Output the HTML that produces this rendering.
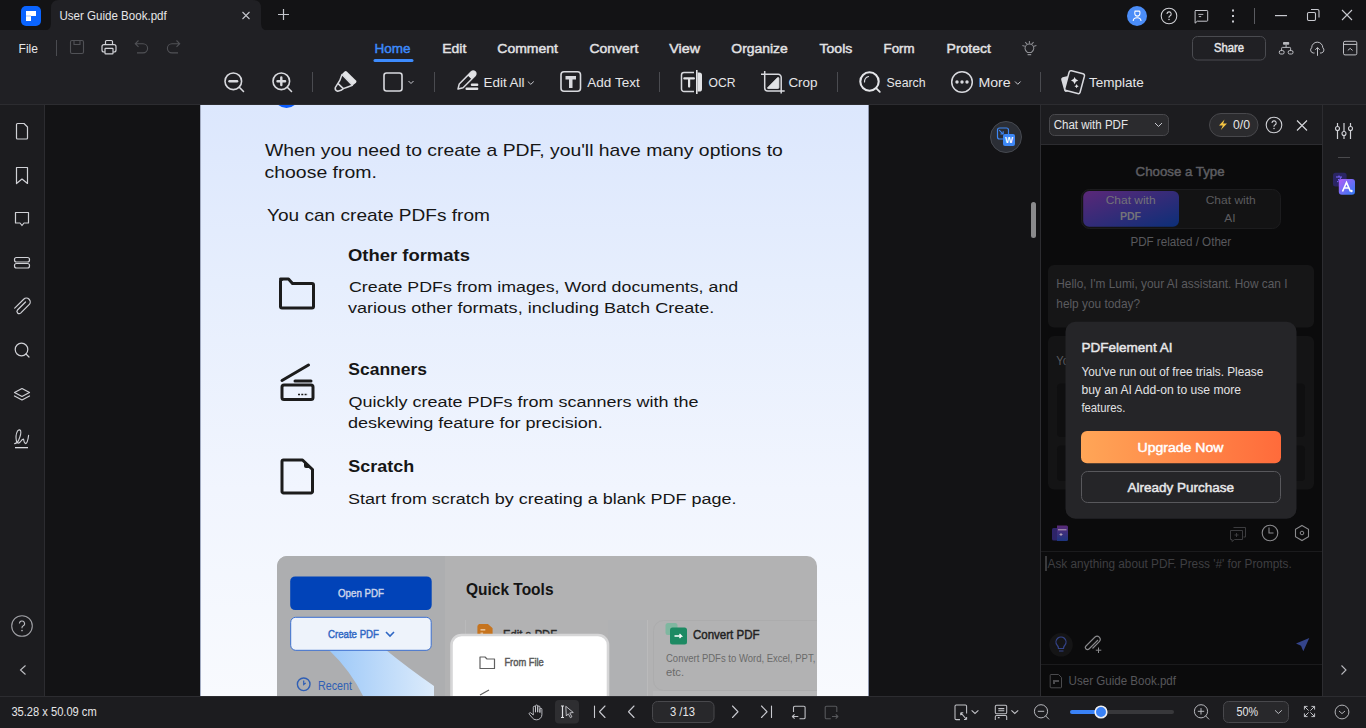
<!DOCTYPE html>
<html><head><meta charset="utf-8">
<style>
*{margin:0;padding:0}
html,body{width:1366px;height:728px;overflow:hidden;background:#131315}
svg{position:absolute;left:0;top:0;display:block}
text{font-family:"Liberation Sans",sans-serif;white-space:pre}
</style></head><body>
<svg width="1366" height="728" viewBox="0 0 1366 728">
<defs><linearGradient id="pageg" x1="0" y1="0" x2="0" y2="1"><stop offset="0" stop-color="#dce7fd"/><stop offset="0.3" stop-color="#e6eefd"/><stop offset="0.65" stop-color="#f1f5fe"/><stop offset="1" stop-color="#f8fafe"/></linearGradient><linearGradient id="purp" x1="0" y1="0" x2="1" y2="1"><stop offset="0" stop-color="#5b2878"/><stop offset="1" stop-color="#0c2f78"/></linearGradient><linearGradient id="orng" x1="0" y1="0" x2="1" y2="0"><stop offset="0" stop-color="#ffa657"/><stop offset="1" stop-color="#ff6b3b"/></linearGradient><linearGradient id="book" x1="0" y1="0" x2="0" y2="1"><stop offset="0" stop-color="#5a2a78"/><stop offset="1" stop-color="#1d3580"/></linearGradient><linearGradient id="swoosh" x1="0" y1="0" x2="1" y2="0"><stop offset="0" stop-color="#9cc8f8"/><stop offset="1" stop-color="#dcebfb"/></linearGradient><linearGradient id="trans" x1="0" y1="0" x2="1" y2="1"><stop offset="0" stop-color="#b25cf6"/><stop offset="1" stop-color="#2f7cf6"/></linearGradient><clipPath id="pageclip"><rect x="200" y="105" width="669" height="591"/></clipPath></defs>
<rect x="0" y="0" width="1366" height="31" fill="#131315" />
<rect x="0" y="30" width="1366" height="74" fill="#202024" />
<path d="M43,31 Q51,31 51,23 L51,8 Q51,0 59,0 L253,0 Q261,0 261,8 L261,23 Q261,31 269,31 Z" fill="#202024"/>
<rect x="0" y="104" width="1366" height="1" fill="#2c2c30" />
<rect x="0" y="105" width="44" height="591" fill="#1c1c1f" />
<rect x="44" y="105" width="1" height="591" fill="#2c2c30" />
<rect x="45" y="105" width="995" height="591" fill="#131315" />
<rect x="200" y="105" width="669" height="591" fill="url(#pageg)" />
<rect x="868" y="105" width="1" height="591" fill="#8e96ad" />
<rect x="200" y="105" width="1" height="591" fill="#a3acc2" />
<rect x="1040" y="105" width="1" height="591" fill="#2c2c30" />
<rect x="1041" y="105" width="281" height="40" fill="#1c1c1f" />
<rect x="1041" y="144" width="281" height="1" fill="#2c2c30" />
<rect x="1041" y="145" width="281" height="551" fill="#0b0b0c" />
<rect x="1322" y="105" width="1" height="591" fill="#2c2c30" />
<rect x="1323" y="105" width="43" height="591" fill="#1c1c1f" />
<rect x="0" y="696" width="1366" height="1" fill="#2c2c30" />
<rect x="0" y="697" width="1366" height="31" fill="#1c1c1f" />
<rect x="21" y="6" width="20" height="20" fill="#0a64ff" rx="5" />
<path d="M26,11 H36 V16 H31 V21 H26 Z" fill="#ffffff"/>
<rect x="26" y="15.5" width="5" height="1" fill="#9fc3ff" />
<text x="59.50" y="20.00" font-size="12.5" font-weight="400" fill="#e6e6e8" textLength="107.20" lengthAdjust="spacingAndGlyphs" >User Guide Book.pdf</text>
<path d="M242.5,12 L249.5,19 M249.5,12 L242.5,19" stroke="#c4c6cd" stroke-width="1.1" fill="none"/>
<path d="M283.5,9 V20 M278,14.5 H289" stroke="#c4c6cd" stroke-width="1.2" fill="none"/>
<circle cx="1137" cy="16" r="10" fill="#4b8df8"/>
<path d="M1134.6,11.1 h4.4 a0.9,0.9 0 0 1 0.9,0.9 v1.6 a2.5,2.5 0 0 1 -5.1,0 v-1.6 a0.9,0.9 0 0 1 0.9,-0.9 z M1133.2,21 q0,-3.3 3.9,-3.3 q3.9,0 3.9,3.3" stroke="#ffffff" stroke-width="1.05" fill="none"/>
<circle cx="1169" cy="16" r="7.8" stroke="#d0d1d6" stroke-width="1.05" fill="none"/>
<path d="M1167,14 a2.1,2.1 0 1 1 2.9,1.9 q-0.9,0.4 -0.9,1.4 v0.4" stroke="#d0d1d6" stroke-width="1.1" fill="none"/><circle cx="1169" cy="19.6" r="0.75" fill="#d0d1d6"/>
<path d="M1195.3,10.5 h11.6 a0.8,0.8 0 0 1 0.8,0.8 v9.1 a0.8,0.8 0 0 1 -0.8,0.8 h-9.6 l-2.2,2 v-11.9 a0.8,0.8 0 0 1 0.8,-0.8 z" stroke="#c8c9cf" stroke-width="1" fill="none" stroke-linejoin="round"/>
<path d="M1198.3,14.4 h5 M1198.8,16.6 h2.4" stroke="#c8c9cf" stroke-width="0.9"/>
<g fill="#c8c9cf"><rect x="1232" y="9.5" width="2" height="2"/><rect x="1232" y="15" width="2" height="2"/><rect x="1232" y="20.5" width="2" height="2"/></g>
<rect x="1254" y="8" width="1" height="16" fill="#5a5b60" />
<rect x="1275" y="15" width="12" height="1.2" fill="#c8c9cf" />
<rect x="1307.5" y="12.5" width="8" height="8" rx="1.2" stroke="#c8c9cf" stroke-width="1.1" fill="none"/>
<path d="M1311,9.5 h6.5 a1.5,1.5 0 0 1 1.5,1.5 v6.5" stroke="#c8c9cf" stroke-width="1.1" fill="none"/>
<path d="M1342,10 L1352,20 M1352,10 L1342,20" stroke="#c8c9cf" stroke-width="1.1" fill="none"/>
<text x="18.60" y="53.00" font-size="13" font-weight="400" fill="#e6e6e8" textLength="19.40" lengthAdjust="spacingAndGlyphs" >File</text>
<rect x="56" y="40" width="1" height="16" fill="#4a4b50" />
<path d="M70.5,42 a1.5,1.5 0 0 1 1.5,-1.5 h10 a1.5,1.5 0 0 1 1.5,1.5 v10 a1.5,1.5 0 0 1 -1.5,1.5 h-10 a1.5,1.5 0 0 1 -1.5,-1.5 z M74,40.5 v4 h6 v-4" stroke="#505156" stroke-width="1.1" fill="none"/>
<path d="M105.5,44.5 v-3 a1,1 0 0 1 1,-1 h5 a1,1 0 0 1 1,1 v3" stroke="#d0d1d6" stroke-width="1.2" fill="none"/>
<rect x="102" y="44.6" width="14" height="7.4" rx="2" stroke="#d0d1d6" stroke-width="1.2" fill="none"/>
<rect x="105" y="48.3" width="8" height="5.6" rx="0.6" stroke="#d0d1d6" stroke-width="1.2" fill="#202024"/>
<path d="M138.5,40.5 l-3.2,3.2 l3.2,3.2 M135.5,43.7 h7.5 a4.6,4.6 0 0 1 0,9.2 h-6" stroke="#505156" stroke-width="1.1" fill="none"/>
<path d="M176.5,40.5 l3.2,3.2 l-3.2,3.2 M179.5,43.7 h-7.5 a4.6,4.6 0 0 0 0,9.2 h6" stroke="#505156" stroke-width="1.1" fill="none"/>
<text x="374.50" y="53.00" font-size="13.5" font-weight="400" fill="#3d8bfd" textLength="36.00" lengthAdjust="spacingAndGlyphs"  stroke="#3d8bfd" stroke-width="0.45">Home</text>
<rect x="373.5" y="59" width="40" height="3" rx="1.5" fill="#3d8bfd"/>
<text x="442.20" y="53.00" font-size="13.5" font-weight="400" fill="#e2e2e4" textLength="24.10" lengthAdjust="spacingAndGlyphs"  stroke="#e2e2e4" stroke-width="0.45">Edit</text>
<text x="497.30" y="53.00" font-size="13.5" font-weight="400" fill="#e2e2e4" textLength="60.60" lengthAdjust="spacingAndGlyphs"  stroke="#e2e2e4" stroke-width="0.45">Comment</text>
<text x="589.50" y="53.00" font-size="13.5" font-weight="400" fill="#e2e2e4" textLength="48.90" lengthAdjust="spacingAndGlyphs"  stroke="#e2e2e4" stroke-width="0.45">Convert</text>
<text x="669.20" y="53.00" font-size="13.5" font-weight="400" fill="#e2e2e4" textLength="30.80" lengthAdjust="spacingAndGlyphs"  stroke="#e2e2e4" stroke-width="0.45">View</text>
<text x="731.30" y="53.00" font-size="13.5" font-weight="400" fill="#e2e2e4" textLength="56.50" lengthAdjust="spacingAndGlyphs"  stroke="#e2e2e4" stroke-width="0.45">Organize</text>
<text x="819.50" y="53.00" font-size="13.5" font-weight="400" fill="#e2e2e4" textLength="32.80" lengthAdjust="spacingAndGlyphs"  stroke="#e2e2e4" stroke-width="0.45">Tools</text>
<text x="883.60" y="53.00" font-size="13.5" font-weight="400" fill="#e2e2e4" textLength="31.00" lengthAdjust="spacingAndGlyphs"  stroke="#e2e2e4" stroke-width="0.45">Form</text>
<text x="946.60" y="53.00" font-size="13.5" font-weight="400" fill="#e2e2e4" textLength="44.20" lengthAdjust="spacingAndGlyphs"  stroke="#e2e2e4" stroke-width="0.45">Protect</text>
<path d="M1027.4,52.4 q-2.4,-2.2 -2.4,-3.9 a4.4,4.4 0 0 1 8.8,0 q0,1.7 -2.4,3.9 z M1027.6,54.6 h3.6" stroke="#8e8f94" stroke-width="1.05" fill="none"/>
<path d="M1029.4,41 v2.8 M1025.2,42.2 l1.9,1.9 M1033.6,42.2 l-1.9,1.9 M1022.4,45.6 l2.4,0.7 M1036.4,45.6 l-2.4,0.7" stroke="#8e8f94" stroke-width="1.05"/>
<rect x="1192.5" y="36.5" width="73" height="23.5" rx="5" fill="none" stroke="#4a4b50" stroke-width="1"/>
<text x="1214.00" y="52.00" font-size="12.5" font-weight="400" fill="#e6e6e8" textLength="30.00" lengthAdjust="spacingAndGlyphs"  stroke="#e6e6e8" stroke-width="0.45">Share</text>
<rect x="1283" y="42" width="6.2" height="2.8" fill="#b8b9be" rx="0.8" />
<path d="M1286.1,44.8 v2.6 M1281.6,50.4 v-2.2 a0.8,0.8 0 0 1 0.8,-0.8 h7.4 a0.8,0.8 0 0 1 0.8,0.8 v2.2" stroke="#c0c1c6" stroke-width="0.95" fill="none"/>
<rect x="1279.3" y="50.6" width="4.8" height="3.4" rx="1.4" stroke="#c8c9cf" stroke-width="0.95" fill="none"/><rect x="1288.2" y="50.6" width="4.8" height="3.4" rx="1.4" stroke="#c8c9cf" stroke-width="0.95" fill="none"/>
<path d="M1314.5,53 h-1.2 a3,3 0 0 1 -1.6,-5.3 a5.5,5.5 0 0 1 11.1,0 a3,3 0 0 1 -1.6,5.3 h-1.2 M1317.5,55.8 v-8.2 M1315.3,49.8 l2.2,-2.2 l2.2,2.2" stroke="#c8c9cf" stroke-width="0.95" fill="none" stroke-linejoin="round"/>
<rect x="1343.5" y="41.3" width="13.3" height="13.6" rx="1.5" stroke="#c8c9cf" stroke-width="0.95" fill="none"/>
<path d="M1343.5,44.4 h13.3 M1347.8,50.4 l2.4,-2 l2.4,2" stroke="#c8c9cf" stroke-width="0.95" fill="none"/>
<circle cx="233.3" cy="81.3" r="8.3" stroke="#d8d9de" stroke-width="1.6" fill="none" stroke-linecap="round" stroke-linejoin="round"/><path d="M239.3,87.3 L243.5,91.5 M229.5,81.3 h7.6" stroke="#d8d9de" stroke-width="1.6" fill="none" stroke-linecap="round" stroke-linejoin="round"/>
<path d="M229.5,81.3 h7.6" stroke="#d8d9de" stroke-width="2.4" stroke-linecap="round"/>
<circle cx="281.3" cy="81.3" r="8.3" stroke="#d8d9de" stroke-width="1.6" fill="none" stroke-linecap="round" stroke-linejoin="round"/><path d="M287.3,87.3 L291.5,91.5" stroke="#d8d9de" stroke-width="1.6" fill="none" stroke-linecap="round" stroke-linejoin="round"/>
<path d="M277.5,81.3 h7.6 M281.3,77.5 v7.6" stroke="#d8d9de" stroke-width="2.4" stroke-linecap="round"/>
<rect x="312" y="72" width="1" height="20" fill="#4a4b50" />
<path d="M341.8,74.2 L344.6,71.4 a1.6,1.6 0 0 1 2.2,0 L356,80.6 a1.6,1.6 0 0 1 0,2.2 L352.6,85.4 Z" fill="#e2e3e6"/>
<path d="M342,74.5 L339.8,80.5 L337.9,83.4 L343.3,88.6 L347.2,87.2 L352.4,85.3 Z" stroke="#d8d9de" stroke-width="1.5" fill="none" stroke-linejoin="round"/>
<path d="M337.9,83.4 L335.3,87.6 Q334.6,90.3 337.6,91.2 L341,90.3 L343.3,88.6" stroke="#d8d9de" stroke-width="1.5" fill="none" stroke-linejoin="round"/>
<rect x="384" y="73" width="18" height="18" rx="2.5" stroke="#d8d9de" stroke-width="1.6" fill="none"/>
<path d="M408.5,81 l2.5,2.5 l2.5,-2.5" stroke="#c8c9cf" stroke-width="1" fill="none"/>
<rect x="434" y="72" width="1" height="20" fill="#4a4b50" />
<g transform="translate(458,89) rotate(-45)"><path d="M0,0 L4.5,-2.7 H21.5 A2.7,2.7 0 0 1 21.5,2.7 H4.5 Z" stroke="#d8d9de" stroke-width="1.5" fill="none" stroke-linejoin="round"/><path d="M16.5,-2.7 H21.5 A2.7,2.7 0 0 1 21.5,2.7 H16.5 Z" fill="#e2e3e6"/></g>
<rect x="470.8" y="83.6" width="7.5" height="2.3" rx="1" fill="#e2e3e6"/><rect x="465.5" y="87.6" width="12.8" height="2.3" rx="1" fill="#e2e3e6"/>
<text x="483.50" y="87.00" font-size="13.5" font-weight="400" fill="#e6e6e8" textLength="41.00" lengthAdjust="spacingAndGlyphs" >Edit All</text>
<path d="M527.8,81.5 l3,2.8 l3,-2.8" stroke="#c8c9cf" stroke-width="1" fill="none"/>
<rect x="561" y="71.8" width="19.5" height="19.5" rx="3" stroke="#d8d9de" stroke-width="1.6" fill="none"/>
<path d="M565.5,76 h10.5 v3.5 h-3.5 v8.5 h-3.5 v-8.5 h-3.5 z" fill="#d8d9de"/>
<text x="587.30" y="87.00" font-size="13.5" font-weight="400" fill="#e6e6e8" textLength="52.40" lengthAdjust="spacingAndGlyphs" >Add Text</text>
<rect x="659" y="72" width="1" height="20" fill="#4a4b50" />
<path d="M694,72.5 h-10 a2.5,2.5 0 0 0 -2.5,2.5 v14 a2.5,2.5 0 0 0 2.5,2.5 h10" stroke="#d8d9de" stroke-width="1.5" fill="none"/>
<path d="M696.8,70 v24" stroke="#e2e3e6" stroke-width="1.6"/>
<path d="M697.6,72.5 h1.8 a2.6,2.6 0 0 1 2.6,2.6 v13.8 a2.6,2.6 0 0 1 -2.6,2.6 h-1.8 z" fill="#e2e3e6"/>
<path d="M684.3,78.4 h9.6 M689.1,78.6 v8" stroke="#e2e3e6" stroke-width="2.2" stroke-linecap="round"/>
<text x="708.60" y="87.00" font-size="13.5" font-weight="400" fill="#e6e6e8" textLength="27.00" lengthAdjust="spacingAndGlyphs" >OCR</text>
<path d="M761,74.3 h17.2 a3,3 0 0 1 3,3 v16.2 M764.7,71 v17 a3,3 0 0 0 3,3 h17" stroke="#d8d9de" stroke-width="1.5" fill="none"/>
<path d="M767.3,88 L777.6,77.6 a0.8,0.8 0 0 1 1.3,0.6 V87.5 a1,1 0 0 1 -1,1 H767.8 z" fill="#e2e3e6" stroke="#e2e3e6" stroke-width="0.8" stroke-linejoin="round"/>
<text x="788.40" y="87.00" font-size="13.5" font-weight="400" fill="#e6e6e8" textLength="29.20" lengthAdjust="spacingAndGlyphs" >Crop</text>
<rect x="837" y="72" width="1" height="20" fill="#4a4b50" />
<circle cx="869.5" cy="81.5" r="9.2" stroke="#e4e5e8" stroke-width="2.1" fill="none"/>
<path d="M876.6,88.6 l3.2,3.2" stroke="#e4e5e8" stroke-width="1.8" stroke-linecap="round"/>
<path d="M864.5,82 a5.5,5.5 0 0 1 4,-5.5" stroke="#d8d9de" stroke-width="1.2" fill="none" stroke-linecap="round"/>
<text x="886.60" y="87.00" font-size="13.5" font-weight="400" fill="#e6e6e8" textLength="39.00" lengthAdjust="spacingAndGlyphs" >Search</text>
<circle cx="962" cy="82" r="10.3" stroke="#d8d9de" stroke-width="1.5" fill="none"/>
<g fill="#d8d9de"><circle cx="957" cy="82" r="1.7"/><circle cx="962" cy="82" r="1.7"/><circle cx="967" cy="82" r="1.7"/></g>
<text x="978.40" y="87.00" font-size="13.5" font-weight="400" fill="#e6e6e8" textLength="32.20" lengthAdjust="spacingAndGlyphs" >More</text>
<path d="M1015,81.5 l2.8,2.8 l2.8,-2.8" stroke="#c8c9cf" stroke-width="1" fill="none"/>
<rect x="1040" y="72" width="1" height="20" fill="#4a4b50" />
<path d="M1068,76 L1062.6,77.3 Q1060.8,77.9 1061.2,79.7 L1064.2,90.6 Q1064.8,92.3 1066.6,91.8 L1071,90.6 Z" fill="#d8d9de"/>
<path d="M1071.5,70.8 l11.5,3 a2,2 0 0 1 1.4,2.4 l-4.3,16 a2,2 0 0 1 -2.4,1.4 l-11.5,-3 a2,2 0 0 1 -1.4,-2.4 l4.3,-16 a2,2 0 0 1 2.4,-1.4 z" stroke="#d8d9de" stroke-width="1.5" fill="#202024"/>
<path d="M1074.6,77.0 Q1075.2479999999998,79.952 1078.1999999999998,80.6 Q1075.2479999999998,81.24799999999999 1074.6,84.19999999999999 Q1073.952,81.24799999999999 1071.0,80.6 Q1073.952,79.952 1074.6,77.0 Z M1076.6,84.10000000000001 Q1076.9779999999998,85.822 1078.6999999999998,86.2 Q1076.9779999999998,86.578 1076.6,88.3 Q1076.222,86.578 1074.5,86.2 Q1076.222,85.822 1076.6,84.10000000000001 Z" fill="#e2e3e6"/>
<text x="1089.00" y="86.80" font-size="13.5" font-weight="400" fill="#e6e6e8" textLength="54.80" lengthAdjust="spacingAndGlyphs" >Template</text>
<path d="M16.5,124.5 a1,1 0 0 1 1,-1 h6.5 l3.5,3.5 v11 a1,1 0 0 1 -1,1 h-9 a1,1 0 0 1 -1,-1 z" stroke="#d0d1d6" stroke-width="1.2" fill="none" stroke-linejoin="round" stroke-linecap="round"/>
<path d="M16.5,167.5 h11 v16 l-5.5,-4.5 l-5.5,4.5 z" stroke="#d0d1d6" stroke-width="1.2" fill="none" stroke-linejoin="round" stroke-linecap="round"/>
<path d="M15.5,212.5 h13 v10.5 h-4.5 l-2,2.5 l-2,-2.5 h-4.5 z" stroke="#d0d1d6" stroke-width="1.2" fill="none" stroke-linejoin="round" stroke-linecap="round"/>
<rect x="14.5" y="257.5" width="15" height="4.5" rx="2" stroke="#d0d1d6" stroke-width="1.2" fill="none" stroke-linejoin="round" stroke-linecap="round"/><rect x="14.5" y="263.5" width="15" height="4.5" rx="2" stroke="#d0d1d6" stroke-width="1.2" fill="none" stroke-linejoin="round" stroke-linecap="round"/>
<path d="M25.5,302 l-8,8 a2.2,2.2 0 0 0 3.1,3.1 l8.5,-8.5 a3.8,3.8 0 0 0 -5.4,-5.4 l-9,9" stroke="#d0d1d6" stroke-width="1.2" fill="none" stroke-linejoin="round" stroke-linecap="round"/>
<circle cx="21.5" cy="349.5" r="6.3" stroke="#d0d1d6" stroke-width="1.2" fill="none" stroke-linejoin="round" stroke-linecap="round"/><path d="M26,354 l3,3" stroke="#d0d1d6" stroke-width="1.2" fill="none" stroke-linejoin="round" stroke-linecap="round"/>
<path d="M22,388.5 l7.5,4 l-7.5,4 l-7.5,-4 z M14.5,396 l7.5,4 l7.5,-4" stroke="#d0d1d6" stroke-width="1.2" fill="none" stroke-linejoin="round" stroke-linecap="round"/>
<path d="M14.6,443.6 Q17,443.6 18.6,440.2 Q21.6,433.5 20.6,430.6 Q19.4,428.8 17.4,431.2 Q15.3,435.2 16.4,441 Q17.4,444.6 20.2,442 Q22.6,438.6 23.6,439.2 Q24,443 25.6,443.6 Q27.6,443.2 28.6,435.4" stroke="#d0d1d6" stroke-width="1.1" fill="none" stroke-linecap="round" stroke-linejoin="round"/>
<rect x="15" y="447" width="13" height="1.3" fill="#d8d9de" />
<circle cx="22" cy="626" r="10.3" stroke="#a0a1a6" stroke-width="1.1" fill="none"/>
<path d="M19.4,623.6 a2.6,2.6 0 1 1 3.6,2.4 q-1,0.5 -1,1.7 v0.6" stroke="#b8b9be" stroke-width="1.1" fill="none"/><circle cx="22" cy="630.6" r="0.8" fill="#b8b9be"/>
<path d="M25.5,665.5 l-5,4.5 l5,4.5" stroke="#c0c1c6" stroke-width="1.1" fill="none"/>
<g clip-path="url(#pageclip)">
<circle cx="286.5" cy="95.5" r="12.5" fill="#0a5cff"/>
<text x="264.90" y="155.80" font-size="17" font-weight="400" fill="#161616" textLength="517.90" lengthAdjust="spacingAndGlyphs" >When you need to create a PDF, you&#x27;ll have many options to</text>
<text x="264.50" y="177.80" font-size="17" font-weight="400" fill="#161616" textLength="112.40" lengthAdjust="spacingAndGlyphs" >choose from.</text>
<text x="267.00" y="220.90" font-size="17" font-weight="400" fill="#161616" textLength="222.90" lengthAdjust="spacingAndGlyphs" >You can create PDFs from</text>
<text x="348.00" y="260.50" font-size="17" font-weight="700" fill="#161616" textLength="121.90" lengthAdjust="spacingAndGlyphs" >Other formats</text>
<text x="349.00" y="292.20" font-size="15.2" font-weight="400" fill="#161616" textLength="389.20" lengthAdjust="spacingAndGlyphs" >Create PDFs from images, Word documents, and</text>
<text x="348.00" y="313.30" font-size="15.2" font-weight="400" fill="#161616" textLength="366.40" lengthAdjust="spacingAndGlyphs" >various other formats, including Batch Create.</text>
<text x="348.30" y="374.90" font-size="17" font-weight="700" fill="#161616" textLength="78.70" lengthAdjust="spacingAndGlyphs" >Scanners</text>
<text x="348.50" y="407.00" font-size="15.2" font-weight="400" fill="#161616" textLength="350.10" lengthAdjust="spacingAndGlyphs" >Quickly create PDFs from scanners with the</text>
<text x="348.00" y="428.30" font-size="15.2" font-weight="400" fill="#161616" textLength="254.80" lengthAdjust="spacingAndGlyphs" >deskewing feature for precision.</text>
<text x="348.30" y="472.00" font-size="17" font-weight="700" fill="#161616" textLength="65.90" lengthAdjust="spacingAndGlyphs" >Scratch</text>
<text x="348.00" y="504.30" font-size="15.2" font-weight="400" fill="#161616" textLength="388.50" lengthAdjust="spacingAndGlyphs" >Start from scratch by creating a blank PDF page.</text>
<path d="M280.5,279 h8 l4,4.5 h19.5 a1.5,1.5 0 0 1 1.5,1.5 v21.5 a1.5,1.5 0 0 1 -1.5,1.5 h-30 a1.5,1.5 0 0 1 -1.5,-1.5 v-25.5 a1.5,1.5 0 0 1 1.5,-1.5 z" stroke="#1c1c1c" stroke-width="3" fill="none" stroke-linejoin="round" stroke-linecap="round"/>
<path d="M282,380.5 L308.5,365" stroke="#1c1c1c" stroke-width="3" fill="none" stroke-linejoin="round" stroke-linecap="round"/><path d="M295,381 h16" stroke="#1c1c1c" stroke-width="3" stroke-linecap="round"/>
<rect x="282" y="385" width="31" height="14.5" rx="2" stroke="#1c1c1c" stroke-width="3" fill="none" stroke-linejoin="round" stroke-linecap="round"/>
<path d="M298,394.5 h10" stroke="#1c1c1c" stroke-width="1.3" stroke-dasharray="2,1.3"/>
<path d="M283.5,460 h19 l10,9.5 v22 a1.5,1.5 0 0 1 -1.5,1.5 h-27.5 a1.5,1.5 0 0 1 -1.5,-1.5 v-30 a1.5,1.5 0 0 1 1.5,-1.5 z" stroke="#1c1c1c" stroke-width="3" fill="none" stroke-linejoin="round" stroke-linecap="round"/>
<path d="M304,461 l7,7 h-5 a2,2 0 0 1 -2,-2 z" fill="#1c1c1c"/>
<path d="M277,696 V566 a10,10 0 0 1 10,-10 H807 a10,10 0 0 1 10,10 V696 Z" fill="#b2b2b3"/>
<path d="M277,696 V566 a10,10 0 0 1 10,-10 H445 V696 Z" fill="#adaeb0"/>
<rect x="465" y="620" width="1" height="76" fill="#b9b9ba" />
<rect x="608" y="620" width="39" height="76" fill="#b0b1b3" />
<rect x="647" y="620" width="1" height="76" fill="#bababb" />
<path d="M817,620.5 H663.5 a10,10 0 0 0 -10,10 V680.5 a10,10 0 0 0 10,10 H817" fill="none" stroke="#acacad" stroke-width="1"/>
<rect x="653" y="691" width="164" height="5" fill="#b7b7b8" />
<path d="M329,650 L386,650 Q408,668 434,686 L434,700 L365,700 Q352,672 329,650 Z" fill="url(#swoosh)"/>
<rect x="290.2" y="576.4" width="141.5" height="33.7" rx="5" fill="#0143b8"/>
<text x="338.00" y="597.00" font-size="11" font-weight="400" fill="#c9d3ea" textLength="46.00" lengthAdjust="spacingAndGlyphs"  stroke="#c9d3ea" stroke-width="0.45">Open PDF</text>
<rect x="290.7" y="617.3" width="140.5" height="33" rx="5" fill="#eef3fb" stroke="#3a6fd0" stroke-width="1"/>
<text x="328.00" y="638.00" font-size="11" font-weight="400" fill="#2f67c4" textLength="51.00" lengthAdjust="spacingAndGlyphs"  stroke="#2f67c4" stroke-width="0.45">Create PDF</text>
<path d="M386,632 l4,4 l4,-4" stroke="#2f67c4" stroke-width="1.6" fill="none"/>
<circle cx="303.7" cy="684.3" r="6.3" stroke="#2f5fb5" stroke-width="1.4" fill="none"/><path d="M303.7,680.5 v4 l2,-1.5" stroke="#2f5fb5" stroke-width="1.2" fill="none"/>
<text x="318.00" y="689.50" font-size="12" font-weight="400" fill="#2f5fb5" textLength="34.00" lengthAdjust="spacingAndGlyphs" >Recent</text>
<text x="466.00" y="594.60" font-size="16.5" font-weight="700" fill="#141414" textLength="87.50" lengthAdjust="spacingAndGlyphs" >Quick Tools</text>
<path d="M479.5,624.5 h8 l4.5,4 v6.5 h-14 v-8.5 a2,2 0 0 1 1.5,-2 z" fill="#c6741f" stroke="#c6741f" stroke-width="1.2" stroke-linejoin="round"/>
<rect x="480.5" y="629.2" width="4.8" height="1.3" fill="#f0d2b0" />
<rect x="480.5" y="632.6" width="2.6" height="1.1" fill="#f0d2b0" />
<text x="503.00" y="638.50" font-size="12" font-weight="400" fill="#2a2a2a" textLength="54.00" lengthAdjust="spacingAndGlyphs"  stroke="#2a2a2a" stroke-width="0.45">Edit a PDF</text>
<rect x="451.5" y="635" width="156.5" height="80" rx="10" fill="#ffffff" stroke="#d6d6d7" stroke-width="2.6"/>
<path d="M480,657 h5 l2,2 h7.5 v9.5 h-14.5 z" stroke="#606060" stroke-width="1.2" fill="none" stroke-linejoin="round"/>
<text x="504.40" y="666.00" font-size="10.5" font-weight="400" fill="#5a5a5a" textLength="39.40" lengthAdjust="spacingAndGlyphs"  stroke="#5a5a5a" stroke-width="0.45">From File</text>
<path d="M480,695 l9,-5" stroke="#606060" stroke-width="1.2"/>
<rect x="665.5" y="623" width="12" height="12" fill="#7fb7a0" rx="2.5" />
<rect x="670" y="627.5" width="17" height="17" fill="#1d8a63" rx="2.5" />
<path d="M674.5,636 h7 l-2,-2 M681.5,636 l-2,2" stroke="#ffffff" stroke-width="1.3" fill="none"/>
<text x="693.00" y="639.00" font-size="12.5" font-weight="400" fill="#222222" textLength="66.50" lengthAdjust="spacingAndGlyphs"  stroke="#222222" stroke-width="0.45">Convert PDF</text>
<text x="666.00" y="661.80" font-size="10" font-weight="400" fill="#6a6a6a" textLength="149.30" lengthAdjust="spacingAndGlyphs" >Convert PDFs to Word, Excel, PPT,</text>
<text x="666.00" y="675.80" font-size="10" font-weight="400" fill="#6a6a6a" textLength="18.00" lengthAdjust="spacingAndGlyphs" >etc.</text>
</g>
<circle cx="1006" cy="137" r="15.5" fill="#2b2e35" stroke="#464950" stroke-width="1"/>
<rect x="997.5" y="128" width="11" height="11" rx="2" stroke="#3d87f5" stroke-width="1.2" fill="none"/>
<path d="M999.2,130.2 l3.6,3.6 M1003.2,131.2 v2.8 h-2.8" stroke="#3d87f5" stroke-width="1.1" fill="none"/>
<rect x="1003" y="134" width="12" height="12" fill="#3d87f5" rx="2" />
<text x="1009" y="142.6" font-size="8.5" font-weight="700" fill="#ffffff" text-anchor="middle">W</text>
<rect x="1031" y="202" width="5" height="36" fill="#8a8a8c" rx="2.5" />
<rect x="1049.5" y="114.5" width="119" height="21" rx="5" fill="#2b2b2e" stroke="#48484c" stroke-width="1"/>
<text x="1053.70" y="129.00" font-size="12.5" font-weight="400" fill="#e6e6e8" textLength="74.30" lengthAdjust="spacingAndGlyphs" >Chat with PDF</text>
<path d="M1155,123 l3.5,3.5 l3.5,-3.5" stroke="#c8c9cf" stroke-width="1" fill="none"/>
<rect x="1209.5" y="113.5" width="48.5" height="23" rx="11.5" fill="#2b2b2e" stroke="#48484c" stroke-width="1"/>
<path d="M1224.5,119.5 l-5.5,6 h3.8 l-2,4.5 l6.2,-6.5 h-3.8 z" fill="#f5c443"/>
<text x="1233.00" y="129.00" font-size="12" font-weight="400" fill="#e6e6e8" textLength="17.00" lengthAdjust="spacingAndGlyphs" >0/0</text>
<circle cx="1274" cy="125" r="7.8" stroke="#d0d1d6" stroke-width="1.1" fill="none"/>
<path d="M1272,123 a2.1,2.1 0 1 1 2.9,1.9 q-0.9,0.4 -0.9,1.4 v0.4" stroke="#d0d1d6" stroke-width="1.1" fill="none"/><circle cx="1274" cy="128.6" r="0.75" fill="#d0d1d6"/>
<path d="M1297,120.5 L1307,130.5 M1307,120.5 L1297,130.5" stroke="#d8d9de" stroke-width="1.1" fill="none"/>
<text x="1135.60" y="176.30" font-size="13" font-weight="400" fill="#5e5e62" textLength="89.00" lengthAdjust="spacingAndGlyphs"  stroke="#5e5e62" stroke-width="0.45">Choose a Type</text>
<rect x="1081.5" y="189.5" width="199" height="39" rx="8" fill="#131314" stroke="#1c1c1e" stroke-width="1"/>
<rect x="1083.2" y="190.9" width="95.8" height="35.8" rx="6" fill="url(#purp)"/>
<text x="1105.70" y="203.80" font-size="11.5" font-weight="400" fill="#737378" textLength="49.90" lengthAdjust="spacingAndGlyphs" >Chat with</text>
<text x="1119.90" y="219.60" font-size="11.5" font-weight="700" fill="#737378" textLength="21.20" lengthAdjust="spacingAndGlyphs" >PDF</text>
<text x="1205.70" y="203.80" font-size="11.5" font-weight="400" fill="#5b5b5f" textLength="50.10" lengthAdjust="spacingAndGlyphs" >Chat with</text>
<text x="1224.30" y="222.00" font-size="11.5" font-weight="400" fill="#5b5b5f" textLength="11.30" lengthAdjust="spacingAndGlyphs" >AI</text>
<text x="1130.40" y="245.50" font-size="12" font-weight="400" fill="#59595d" textLength="100.80" lengthAdjust="spacingAndGlyphs" >PDF related / Other</text>
<rect x="1048" y="265" width="266" height="62.5" fill="#161617" rx="6" />
<text x="1056.30" y="288.30" font-size="12.2" font-weight="400" fill="#5b5b5f" textLength="231.20" lengthAdjust="spacingAndGlyphs" >Hello, I&#x27;m Lumi, your AI assistant. How can I</text>
<text x="1056.30" y="307.80" font-size="12.2" font-weight="400" fill="#5b5b5f" textLength="83.70" lengthAdjust="spacingAndGlyphs" >help you today?</text>
<rect x="1048" y="336" width="266" height="153.5" fill="#141415" rx="6" />
<text x="1056.30" y="365.00" font-size="12.2" font-weight="400" fill="#5b5b5f" textLength="18.70" lengthAdjust="spacingAndGlyphs" >You</text>
<rect x="1057" y="383.5" width="248" height="53.5" fill="#0f0f10" rx="4" />
<rect x="1057" y="445.5" width="248" height="35.5" fill="#0f0f10" rx="4" />
<rect x="1065.5" y="321.7" width="231" height="197" fill="#252528" rx="10" />
<text x="1081.40" y="352.00" font-size="13.5" font-weight="400" fill="#e8e8ea" textLength="91.10" lengthAdjust="spacingAndGlyphs"  stroke="#e8e8ea" stroke-width="0.45">PDFelement AI</text>
<text x="1081.40" y="376.00" font-size="12" font-weight="400" fill="#e2e2e4" textLength="181.90" lengthAdjust="spacingAndGlyphs" >You&#x27;ve run out of free trials. Please</text>
<text x="1081.40" y="393.60" font-size="12" font-weight="400" fill="#e2e2e4" textLength="159.60" lengthAdjust="spacingAndGlyphs" >buy an AI Add-on to use more</text>
<text x="1081.40" y="411.70" font-size="12" font-weight="400" fill="#e2e2e4" textLength="44.00" lengthAdjust="spacingAndGlyphs" >features.</text>
<rect x="1081" y="431" width="200" height="32.2" fill="url(#orng)" rx="6" />
<text x="1137.50" y="452.00" font-size="13" font-weight="400" fill="#ffffff" textLength="86.00" lengthAdjust="spacingAndGlyphs"  stroke="#ffffff" stroke-width="0.45">Upgrade Now</text>
<rect x="1081.5" y="471.5" width="199" height="31" rx="6" fill="#252528" stroke="#58585c" stroke-width="1"/>
<text x="1127.50" y="492.00" font-size="13" font-weight="400" fill="#e8e8ea" textLength="106.50" lengthAdjust="spacingAndGlyphs"  stroke="#e8e8ea" stroke-width="0.45">Already Purchase</text>
<path d="M1053.5,528 h9 v12.5 h-9 a1.5,1.5 0 0 1 -1.5,-1.5 v-9.5 a1.5,1.5 0 0 1 1.5,-1.5 z" fill="#2e2468"/>
<path d="M1057,525.5 h9.5 a1.5,1.5 0 0 1 1.5,1.5 v12.5 a1.5,1.5 0 0 1 -1.5,1.5 h-9.5 z" fill="url(#book)"/>
<path d="M1058,529.8 h8.5" stroke="#b8a8b8" stroke-width="1"/><path d="M1059.5,534.5 h3 M1061,533 v3" stroke="#b8a8b8" stroke-width="0.9"/>
<path d="M1233.5,527.5 h12 v9.5 h-2 M1230.5,530.5 h12 v9 h-8 l-2.5,2 v-2 h-1.5 z M1234.5,535 h4 M1236.5,533 v4" stroke="#3c3c3f" stroke-width="1" fill="none"/>
<circle cx="1270" cy="533" r="7.8" stroke="#8a8a8d" stroke-width="1.1" fill="none"/><path d="M1269,527.5 v5.5 h4.5" stroke="#8a8a8d" stroke-width="1.1" fill="none"/>
<path d="M1302,525.5 l6.5,3.75 v7.5 l-6.5,3.75 l-6.5,-3.75 v-7.5 z" stroke="#8a8a8d" stroke-width="1.1" fill="none"/><circle cx="1302" cy="533" r="1.8" stroke="#8a8a8d" stroke-width="1" fill="none"/>
<rect x="1041" y="551" width="281" height="1" fill="#1b1b1d" />
<rect x="1045.5" y="556" width="1" height="15" fill="#6a6a6d" />
<text x="1047.60" y="567.80" font-size="12.5" font-weight="400" fill="#3f3f42" textLength="244.10" lengthAdjust="spacingAndGlyphs" >Ask anything about PDF. Press &#x27;#&#x27; for Prompts.</text>
<circle cx="1061" cy="644.8" r="11.8" fill="#151516"/>
<path d="M1058.5,648.5 q0,-2 -1.5,-3.5 a5,5 0 1 1 8,0 q-1.5,1.5 -1.5,3.5 z M1059,651 h4.5" stroke="#34448a" stroke-width="1.2" fill="none"/>
<path d="M1098,640 l-9,9 a2,2 0 0 1 -3,-3 l9,-9 a3.2,3.2 0 0 1 4.5,4.5 l-7,7" stroke="#8a8a8d" stroke-width="1.1" fill="none"/>
<path d="M1098.5,647.5 v5.5 M1095.8,650.2 h5.5" stroke="#8a8a8d" stroke-width="1"/>
<path d="M1309.3,638 L1296,643.5 l5,2.3 l2.3,5.5 z" fill="#34448a"/>
<rect x="1041" y="664" width="281" height="1" fill="#1b1b1d" />
<path d="M1051,674.5 h7.5 l3,3 v9.5 a0.8,0.8 0 0 1 -0.8,0.8 h-9.7 a0.8,0.8 0 0 1 -0.8,-0.8 v-11.7 a0.8,0.8 0 0 1 0.8,-0.8 z" stroke="#4a4a4d" stroke-width="1" fill="none"/>
<path d="M1053,680 h6 v2 h-4 v2 h-2 z" fill="#4a4a4d"/>
<text x="1068.60" y="684.70" font-size="12.5" font-weight="400" fill="#57575b" textLength="107.40" lengthAdjust="spacingAndGlyphs" >User Guide Book.pdf</text>
<path d="M1337.5,123 v16 M1344,123 v16 M1350.5,123 v16" stroke="#d0d1d6" stroke-width="1.2"/>
<g fill="#1c1c1f" stroke="#d0d1d6" stroke-width="1.1"><circle cx="1337.5" cy="128.5" r="2"/><circle cx="1344" cy="133.5" r="2"/><circle cx="1350.5" cy="128.5" r="2"/></g>
<rect x="1338" y="157" width="12" height="1" fill="#4a4a4d" />
<rect x="1333" y="172.8" width="13.6" height="13.7" fill="#2a2563" rx="2.5" />
<path d="M1336,177 h6 M1339,175.5 v1.5 M1341,177 q-1,4 -4,5 M1338,179 q1.5,2 3.5,2.5" stroke="#7b66ff" stroke-width="1" fill="none"/>
<rect x="1338.8" y="179" width="16.2" height="15.8" fill="url(#trans)" rx="3" />
<path d="M1342.5,191.5 l4,-9 l4,9 M1344,188 h5" stroke="#ffffff" stroke-width="1.6" fill="none"/>
<circle cx="1351.5" cy="191" r="1.2" fill="#ffffff"/>
<path d="M1341.5,665.5 l4.5,4.5 l-4.5,4.5" stroke="#b8b9be" stroke-width="1.1" fill="none"/>
<text x="11.40" y="716.00" font-size="12" font-weight="400" fill="#e6e6e8" textLength="85.30" lengthAdjust="spacingAndGlyphs" >35.28 x 50.09 cm</text>
<path d="M533.3,712.6 V707.3 a1.1,1.1 0 0 1 2.2,0 V712.2 V706.1 a1.1,1.1 0 0 1 2.2,0 V712.2 V707.1 a1.1,1.1 0 0 1 2.2,0 V712.6 V709.3 a1,1 0 0 1 2,0 V714.6 a5.2,5.2 0 0 1 -5.2,5.2 h-0.6 a4.6,4.6 0 0 1 -3.8,-2 L529.3,714.2 a1,1 0 0 1 1.5,-1.3 L533.3,715 Z" stroke="#c8c9cf" stroke-width="0.9" fill="none" stroke-linejoin="round"/>
<rect x="555" y="700" width="24" height="23.5" fill="#2e2e31" rx="4" />
<path d="M561,706 h3 M562.5,706 v11.5 M561,717.5 h3" stroke="#e0e1e4" stroke-width="1.2" fill="none"/>
<path d="M565.8,706.3 L573.3,712.5 L569.8,712.9 L571.9,716.8 L570.4,717.7 L568.3,713.8 L566.3,716 Z" stroke="#c8c9cf" stroke-width="0.9" fill="none" stroke-linejoin="round"/>
<path d="M594.5,706 v11.5 M605,706 l-5.5,5.75 l5.5,5.75" stroke="#c8c9cf" stroke-width="1.1" fill="none" stroke-linejoin="round" stroke-linecap="round"/>
<path d="M634,706 l-5.5,5.75 l5.5,5.75" stroke="#c8c9cf" stroke-width="1.1" fill="none" stroke-linejoin="round" stroke-linecap="round"/>
<rect x="652.5" y="701.5" width="61.5" height="21" rx="5" fill="#28282b" stroke="#48484c" stroke-width="1"/>
<text x="670.00" y="716.00" font-size="12" font-weight="400" fill="#e6e6e8" textLength="25.00" lengthAdjust="spacingAndGlyphs" >3 /13</text>
<path d="M732.5,706 l5.5,5.75 l-5.5,5.75" stroke="#c8c9cf" stroke-width="1.1" fill="none" stroke-linejoin="round" stroke-linecap="round"/>
<path d="M761.5,706 l5.5,5.75 l-5.5,5.75 M771.5,706 v11.5" stroke="#c8c9cf" stroke-width="1.1" fill="none" stroke-linejoin="round" stroke-linecap="round"/>
<path d="M793.5,712 v-4.5 a1.3,1.3 0 0 1 1.3,-1.3 h9 a1.3,1.3 0 0 1 1.3,1.3 v10 a1.3,1.3 0 0 1 -1.3,1.3 h-4.3 M798.3,716.5 h-5.8 M794.6,714.3 l-2.2,2.2 l2.2,2.2" stroke="#c0c1c6" stroke-width="1.1" fill="none" stroke-linejoin="round"/>
<path d="M836.8,712 v-4.5 a1.3,1.3 0 0 0 -1.3,-1.3 h-9 a1.3,1.3 0 0 0 -1.3,1.3 v10 a1.3,1.3 0 0 0 1.3,1.3 h4.3 M832,716.5 h5.8 M835.7,714.3 l2.2,2.2 l-2.2,2.2" stroke="#56575b" stroke-width="1.1" fill="none" stroke-linejoin="round"/>
<path d="M960,719.6 h-3.8 a1.2,1.2 0 0 1 -1.2,-1.2 v-12.2 a1.2,1.2 0 0 1 1.2,-1.2 h9.2 a1.2,1.2 0 0 1 1.2,1.2 v7.2 M960.7,712.7 L966.6,719.5 M960.7,712.7 h2.6 M960.7,712.7 v2.6 M966.6,719.5 h-2.6 M966.6,719.5 v-2.6" stroke="#c0c1c6" stroke-width="1.05" fill="none" stroke-linejoin="round"/>
<path d="M971.6,710.4 l3.4,3.1 l3.4,-3.1" stroke="#c0c1c6" stroke-width="1.1" fill="none"/>
<path d="M996.5,705.3 h9 a1.2,1.2 0 0 1 1.2,1.2 v6 a1.2,1.2 0 0 1 -1.2,1.2 h-9 a1.2,1.2 0 0 1 -1.2,-1.2 v-6 a1.2,1.2 0 0 1 1.2,-1.2 z M998.3,708.6 h6 M998.3,710.8 h6 M995.3,720 v-3.3 a1.2,1.2 0 0 1 1.2,-1.2 h9 a1.2,1.2 0 0 1 1.2,1.2 v3.3 M997.8,717.6 h1.8" stroke="#c0c1c6" stroke-width="1.05" fill="none" stroke-linejoin="round"/>
<path d="M1011.4,710.4 l3.4,3.1 l3.4,-3.1" stroke="#c0c1c6" stroke-width="1.1" fill="none"/>
<circle cx="1041" cy="711.3" r="6.6" stroke="#c0c1c6" stroke-width="0.95" fill="none"/><path d="M1045.8,716.1 l3,3 M1038.2,711.3 h5.6" stroke="#c0c1c6" stroke-width="0.95" fill="none" stroke-linecap="round"/>
<rect x="1070" y="710" width="31" height="4" fill="#3a82f6" rx="2" />
<rect x="1101" y="710" width="73" height="4" fill="#38383b" rx="2" />
<circle cx="1101" cy="712" r="5.8" fill="#3a82f6" stroke="#f0f0f2" stroke-width="1.6"/>
<circle cx="1201" cy="711.3" r="6.6" stroke="#c0c1c6" stroke-width="0.95" fill="none"/><path d="M1205.8,716.1 l3,3 M1198.2,711.3 h5.6 M1201,708.5 v5.6" stroke="#c0c1c6" stroke-width="0.95" fill="none" stroke-linecap="round"/>
<rect x="1223.5" y="701.5" width="65" height="21" rx="5" fill="#28282b" stroke="#48484c" stroke-width="1"/>
<text x="1236.60" y="716.00" font-size="12" font-weight="400" fill="#e6e6e8" textLength="21.60" lengthAdjust="spacingAndGlyphs" >50%</text>
<path d="M1275,710.3 l3.4,3.2 l3.4,-3.2" stroke="#c0c1c6" stroke-width="0.95" fill="none"/>
<path d="M1304.4,706.4 L1308.6,710.6 M1304.4,706.4 h3.2 M1304.4,706.4 v3.2 M1314.6,706.4 L1310.4,710.6 M1314.6,706.4 h-3.2 M1314.6,706.4 v3.2 M1304.4,716.6 L1308.6,712.4 M1304.4,716.6 h3.2 M1304.4,716.6 v-3.2 M1314.6,716.6 L1310.4,712.4 M1314.6,716.6 h-3.2 M1314.6,716.6 v-3.2" stroke="#c8c9cf" stroke-width="0.95" fill="none"/>
<circle cx="1342" cy="712" r="6.9" stroke="#b8b9be" stroke-width="0.95" fill="none"/><path d="M1339,711 l3,2.6 l3,-2.6" stroke="#b8b9be" stroke-width="0.95" fill="none"/>
</svg>
</body></html>
